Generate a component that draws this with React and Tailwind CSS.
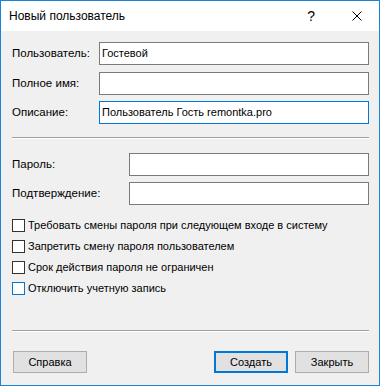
import React from "react";

const font = { fontFamily: '"Liberation Sans", Arial, sans-serif' };

function Input({ value = "", focused = false }) {
  return (
    <div
      className={
        "flex-1 h-[23px] bg-white border flex items-center pl-[2px] text-[11px] text-black " +
        (focused ? "border-[#0078d7]" : "border-[#7a7a7a]")
      }
    >
      {value}
    </div>
  );
}

function Check({ label, focused = false }) {
  return (
    <div className="h-[21px] flex items-center">
      <div
        className={
          "w-[13px] h-[13px] bg-white border " +
          (focused ? "border-[#0078d7]" : "border-[#333333]")
        }
      />
      <span className="ml-[3px] text-[11px] text-black">{label}</span>
    </div>
  );
}

function Button({ children, primary = false }) {
  return (
    <div
      className={
        "w-[74px] h-[22px] bg-[#e1e1e1] flex items-center justify-center text-[11px] text-black " +
        (primary ? "border-2 border-[#0078d7]" : "border border-[#adadad]")
      }
    >
      {children}
    </div>
  );
}

function Separator() {
  return <div className="border-t border-t-[#a0a0a0] border-b border-b-white" />;
}

export default function App() {
  return (
    <div
      className="w-[380px] h-[386px] border border-[#1883d7] bg-[#f0f0f0] flex flex-col"
      style={font}
    >
      <div className="h-[30px] bg-white flex items-center pl-[8px] shrink-0">
        <span className="text-[12px] text-black flex-1">Новый пользователь</span>
        <span className="text-[14px] text-black mr-[37px]">?</span>
        <svg width="10" height="10" viewBox="0 0 10 10" className="mr-[17px]">
          <path d="M0.5 0.5 L9.5 9.5 M9.5 0.5 L0.5 9.5" stroke="#000" strokeWidth="1" />
        </svg>
      </div>
      <div className="flex flex-col pl-[11px] pr-[10px] pt-[11px]">
        <div className="flex flex-col gap-[7px]">
          <div className="flex items-center">
            <span className="w-[87px] text-[11.5px]">Пользователь:</span>
            <Input value="Гостевой" />
          </div>
          <div className="flex items-center">
            <span className="w-[87px] text-[11.5px]">Полное имя:</span>
            <Input />
          </div>
        </div>
        <div className="flex items-center mt-[6px]">
          <span className="w-[87px] text-[11.5px]">Описание:</span>
          <Input value="Пользователь Гость remontka.pro" focused />
        </div>
        <div className="mt-[13px]">
          <Separator />
        </div>
        <div className="flex flex-col gap-[6px] mt-[14px]">
          <div className="flex items-center">
            <span className="w-[117px] text-[11.5px]">Пароль:</span>
            <Input />
          </div>
          <div className="flex items-center">
            <span className="w-[117px] text-[11.5px]">Подтверждение:</span>
            <Input />
          </div>
        </div>
        <div className="flex flex-col mt-[10px]">
          <Check label="Требовать смены пароля при следующем входе в систему" />
          <Check label="Запретить смену пароля пользователем" />
          <Check label="Срок действия пароля не ограничен" />
          <Check label="Отключить учетную запись" focused />
        </div>
        <div className="mt-[31px]">
          <Separator />
        </div>
        <div className="flex items-center mt-[19px] pl-[1px]">
          <Button>Справка</Button>
          <div className="flex-1" />
          <Button primary>Создать</Button>
          <div className="w-[7px]" />
          <Button>Закрыть</Button>
        </div>
      </div>
    </div>
  );
}
